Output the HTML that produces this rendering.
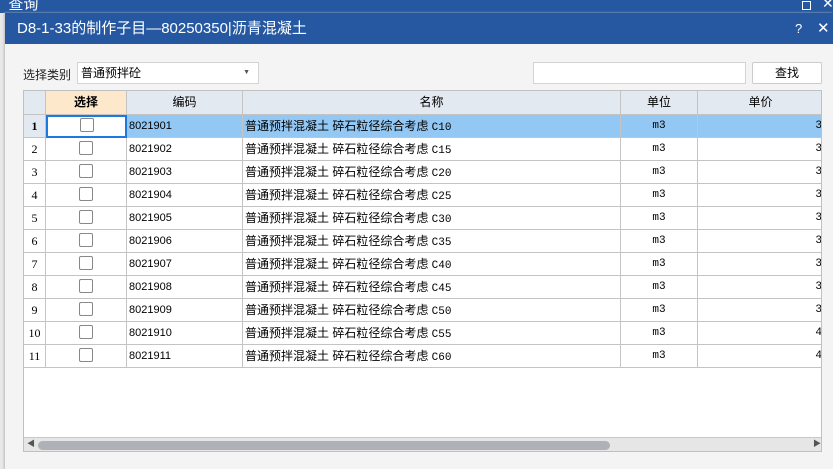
<!DOCTYPE html>
<html><head><meta charset="utf-8"><style>
*{margin:0;padding:0;box-sizing:border-box}
body{width:833px;height:469px;overflow:hidden;background:#e8e8e8;font-family:"Liberation Sans","Noto Sans CJK SC",sans-serif;position:relative}
.a{position:absolute}
.top{left:0;top:0;width:833px;height:13px;background:#2658a2;color:#fff;font-size:15px;line-height:10px;overflow:hidden}
.dlg{left:5px;top:13px;width:828px;height:456px;background:#f4f4f4;box-shadow:-1px 0 2px #bbb}
.tb{left:5px;top:13px;width:828px;height:31px;background:#2658a2;color:#fff;font-size:15px;line-height:31px;padding-left:12px}
.grid{left:23px;top:90px;width:799px;height:362px;background:#fff;border:1px solid #c0c0c0;overflow:hidden}
.c{position:absolute;border-right:1px solid #c4c4c4;border-bottom:1px solid #c4c4c4;font-size:11px;line-height:23px;white-space:nowrap;overflow:hidden}
.h{background:#e3e9f1;font-size:12px;text-align:center;line-height:23px}
.cb{display:inline-block;width:14px;height:14px;border:1px solid #888;border-radius:2px;background:#fff;vertical-align:middle;margin-top:-2px}
.n{font-family:"Liberation Serif","Noto Serif CJK SC",serif;font-size:12px;text-align:center}
.m{font-family:"Liberation Mono",monospace;font-size:11px}
</style></head><body>
<div class="a top">&nbsp;&nbsp;查询<span style="position:absolute;left:802px;top:1px;width:9px;height:9px;border:1px solid #fff"></span><span style="position:absolute;left:822px;top:-2px;font-size:14px">✕</span></div>
<div class="a dlg"></div>
<div class="a tb">D8-1-33的制作子目—80250350|沥青混凝土<span style="position:absolute;left:790px;top:0;font-size:13px">?</span><span style="position:absolute;left:812px;top:0;font-size:15px">✕</span></div>
<div class="a" style="left:23px;top:66px;font-size:12px;color:#222">选择类别</div>
<div class="a" style="left:77px;top:62px;width:182px;height:22px;background:#fff;border:1px solid #d4d4d4;font-size:12px;line-height:20px;padding-left:3px">普通预拌砼<span style="position:absolute;right:8px;top:0;font-size:7px;color:#555">▼</span></div>
<div class="a" style="left:533px;top:62px;width:213px;height:22px;background:#fff;border:1px solid #d4d4d4"></div>
<div class="a" style="left:752px;top:62px;width:70px;height:22px;background:#fff;border:1px solid #ccc;border-radius:2px;font-size:12px;text-align:center;line-height:20px">查找</div>
<div class="a grid" id="g"></div>
<script>
var g=document.getElementById('g'),cols=[0,22,103,219,597,674,800],h='';
var hd=['','选择','编码','名称','单位','单价'];
for(var i=0;i<6;i++){var bg=i==1?'background:#fde8cb;font-weight:bold;':'';h+='<div class="c h" style="left:'+cols[i]+'px;top:0;width:'+(cols[i+1]-cols[i])+'px;height:24px;'+bg+'">'+hd[i]+'</div>';}
var gr=['C10','C15','C20','C25','C30','C35','C40','C45','C50','C55','C60'];
for(var r=0;r<11;r++){var t=24+r*23,sel=r==0;var bg=sel?'background:#94c8f4;':'';
h+='<div class="c n" style="left:0;top:'+t+'px;width:22px;height:23px;'+(sel?'background:#e3e9f1;font-weight:bold;':'')+'">'+(r+1)+'</div>';
h+='<div class="c" style="left:22px;top:'+t+'px;width:81px;height:23px;text-align:center;'+(sel?'border:2px solid #1e78e0;line-height:19px;':'')+'"><span class="cb"></span></div>';
h+='<div class="c" style="left:103px;top:'+t+'px;width:116px;height:23px;padding-left:2px;'+bg+'">'+(8021901+r)+'</div>';
h+='<div class="c" style="left:219px;top:'+t+'px;width:378px;height:23px;padding-left:2px;font-size:12px;'+bg+'">普通预拌混凝土 碎石粒径综合考虑 <span class="m">'+gr[r]+'</span></div>';
h+='<div class="c m" style="left:597px;top:'+t+'px;width:77px;height:23px;text-align:center;'+bg+'">m3</div>';
h+='<div class="c m" style="left:674px;top:'+t+'px;width:126px;height:23px;text-align:right;padding-right:1px;'+bg+'">'+(r>8?'4':'3')+'</div>';}
h+='<div style="position:absolute;left:0;top:346px;width:799px;height:16px;background:#e6e6e6;border-top:1px solid #c8c8c8"></div>';
h+='<div style="position:absolute;left:14px;top:350px;width:572px;height:9px;background:#aeb1b5;border-radius:5px"></div>';
h+='<div style="position:absolute;left:3px;top:347px;font-size:8px;color:#555">◀</div><div style="position:absolute;left:789px;top:347px;font-size:8px;color:#555">▶</div>';
g.innerHTML=h;
</script>
</body></html>
